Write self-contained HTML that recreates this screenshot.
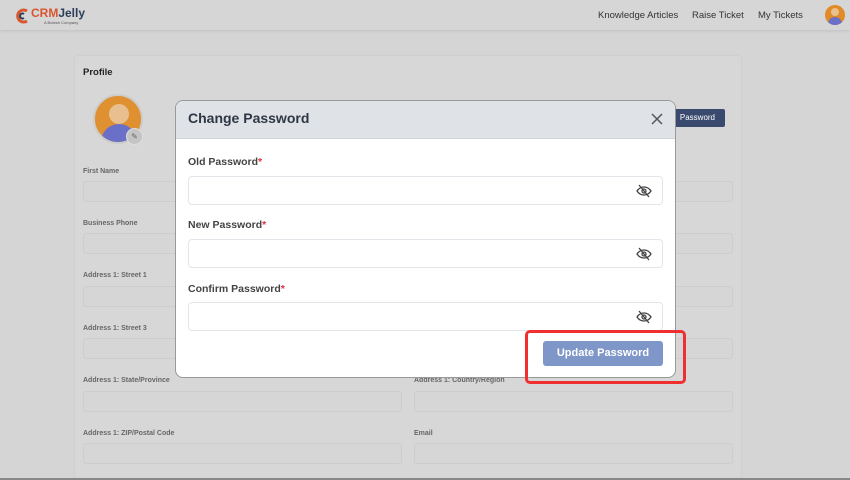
<!DOCTYPE html>
<html style="overflow:hidden;width:850px;height:480px"><head><meta charset="utf-8"><style>
*{box-sizing:border-box;margin:0;padding:0}
body{width:850px;height:480px;overflow:hidden;background:#d5d5d5;font-family:"Liberation Sans",sans-serif;position:relative}
.hdr{position:absolute;left:0;top:0;width:850px;height:30px;background:#d6d6d6;box-shadow:0 1px 3px rgba(0,0,0,.1)}
.nav{position:absolute;top:10px;font-size:9.5px;color:#333}
.card{position:absolute;left:75px;top:56px;width:666px;height:422px;background:#d7d7d7;border-radius:3px;box-shadow:0 0 2px rgba(0,0,0,.08)}
.lbl{position:absolute;font-size:7px;font-weight:bold;color:#666}
.inp{position:absolute;height:21px;border:1px solid #cdcdcd;border-radius:3px;background:#d6d6d6}
.modal{position:absolute;left:175px;top:100px;width:501px;height:278px;background:#fff;border-radius:8px;overflow:hidden;border:1px solid #999}
.mh{height:38px;background:#dfe2e7;border-bottom:1px solid #d0d4da}
.mt{position:absolute;left:12px;top:9px;font-size:14px;font-weight:bold;color:#2f3744}
.ml{position:absolute;left:12px;font-size:10.5px;color:#444;font-weight:bold}
.ml span{color:#e03040}
.mi{position:absolute;left:12px;width:475px;height:29px;border:1px solid #e2e5ea;border-radius:4px}
.eye{position:absolute;right:10px;top:7px}
.btn{position:absolute;left:367px;top:240px;width:120px;height:25px;background:#7f96c8;border-radius:3px;color:#fff;font-size:11px;font-weight:bold;text-align:center;line-height:25px}
.red{position:absolute;left:525px;top:330px;width:161px;height:54px;border:3px solid #f03030;border-radius:5px}
</style></head><body>
<div class="hdr">
 <svg style="position:absolute;left:15px;top:8px" width="16" height="16" viewBox="0 0 16 16"><path d="M12 3A6 6 0 1 0 12 13" fill="none" stroke="#d9572f" stroke-width="3"/><path d="M9 6a2.5 2.5 0 1 0 0 4" fill="none" stroke="#2c3e5a" stroke-width="2"/></svg>
 <div style="position:absolute;left:31px;top:6px;font-size:12px;font-weight:bold;color:#d9572f">CRM<span style="color:#2c3e5a">Jelly</span></div>
 <div style="position:absolute;left:44px;top:20px;font-size:4px;color:#555">A Botesh Company</div>
 <div class="nav" style="left:598px">Knowledge Articles</div>
 <div class="nav" style="left:692px">Raise Ticket</div>
 <div class="nav" style="left:758px">My Tickets</div>
 <div style="position:absolute;left:825px;top:5px;width:20px;height:20px;border-radius:50%;background:#e08a28;overflow:hidden"><div style="position:absolute;left:6px;top:3px;width:8px;height:8px;border-radius:50%;background:#e8c090"></div><div style="position:absolute;left:3px;top:12px;width:14px;height:10px;border-radius:7px 7px 0 0;background:#6a70c8"></div></div>
</div>
<div class="card">
 <div style="position:absolute;left:8px;top:11px;font-size:9.5px;font-weight:bold;color:#222">Profile</div>
 <div style="position:absolute;left:18px;top:38px;width:50px;height:50px;border-radius:50%;background:#df9030;border:2px solid #ccc;overflow:hidden"><div style="position:absolute;left:14px;top:8px;width:20px;height:20px;border-radius:50%;background:#e8c090"></div><div style="position:absolute;left:6px;top:28px;width:36px;height:24px;border-radius:18px 18px 0 0;background:#6a70c8"></div></div>
 <div style="position:absolute;left:51px;top:72px;width:17px;height:17px;border-radius:50%;background:#c4c4c4;border:1px solid #ddd;font-size:8px;color:#666;text-align:center;line-height:15px">✎</div>
 <div style="position:absolute;left:590px;top:53px;width:60px;height:18px;background:#3a4a6e;border-radius:2px;color:#fff;font-size:8px;line-height:18px;text-align:right;padding-right:10px">Password</div>
 <div class="lbl" style="left:8px;top:112px">First Name</div><div class="inp" style="left:8px;top:125px;width:319px"></div><div class="inp" style="left:339px;top:125px;width:319px"></div>
 <div class="lbl" style="left:8px;top:164px">Business Phone</div><div class="inp" style="left:8px;top:177px;width:319px"></div><div class="inp" style="left:339px;top:177px;width:319px"></div>
 <div class="lbl" style="left:8px;top:216px">Address 1: Street 1</div><div class="inp" style="left:8px;top:230px;width:319px"></div><div class="inp" style="left:339px;top:230px;width:319px"></div>
 <div class="lbl" style="left:8px;top:269px">Address 1: Street 3</div><div class="inp" style="left:8px;top:282px;width:319px"></div><div class="inp" style="left:339px;top:282px;width:319px"></div>
 <div class="lbl" style="left:8px;top:321px">Address 1: State/Province</div><div class="inp" style="left:8px;top:335px;width:319px"></div>
 <div class="lbl" style="left:339px;top:321px">Address 1: Country/Region</div><div class="inp" style="left:339px;top:335px;width:319px"></div>
 <div class="lbl" style="left:8px;top:374px">Address 1: ZIP/Postal Code</div><div class="inp" style="left:8px;top:387px;width:319px"></div>
 <div class="lbl" style="left:339px;top:374px">Email</div><div class="inp" style="left:339px;top:387px;width:319px"></div>
</div>
<div style="position:absolute;left:0;top:478px;width:850px;height:2px;background:#888"></div>
<div class="modal">
 <div class="mh"><div class="mt">Change Password</div>
 <svg style="position:absolute;left:474px;top:11px" width="14" height="14" viewBox="0 0 14 14"><path d="M2 2L12 12M12 2L2 12" stroke="#555" stroke-width="1.5"/></svg></div>
 <div class="ml" style="top:55px">Old Password<span>*</span></div>
 <div class="mi" style="top:75px"><svg class="eye" width="16" height="14" viewBox="0 0 16 14"><path d="M1 7C3 4 5 3 8 3s5 1 7 4c-2 3-4 4-7 4S3 10 1 7z" fill="none" stroke="#444" stroke-width="1.3"/><circle cx="8" cy="7" r="2" fill="none" stroke="#444" stroke-width="1.3"/><path d="M3 1L13 13" stroke="#444" stroke-width="1.3"/></svg></div>
 <div class="ml" style="top:118px">New Password<span>*</span></div>
 <div class="mi" style="top:138px"><svg class="eye" width="16" height="14" viewBox="0 0 16 14"><path d="M1 7C3 4 5 3 8 3s5 1 7 4c-2 3-4 4-7 4S3 10 1 7z" fill="none" stroke="#444" stroke-width="1.3"/><circle cx="8" cy="7" r="2" fill="none" stroke="#444" stroke-width="1.3"/><path d="M3 1L13 13" stroke="#444" stroke-width="1.3"/></svg></div>
 <div class="ml" style="top:182px">Confirm Password<span>*</span></div>
 <div class="mi" style="top:201px"><svg class="eye" width="16" height="14" viewBox="0 0 16 14"><path d="M1 7C3 4 5 3 8 3s5 1 7 4c-2 3-4 4-7 4S3 10 1 7z" fill="none" stroke="#444" stroke-width="1.3"/><circle cx="8" cy="7" r="2" fill="none" stroke="#444" stroke-width="1.3"/><path d="M3 1L13 13" stroke="#444" stroke-width="1.3"/></svg></div>
 <div class="btn">Update Password</div>
</div>
<div class="red"></div>
</body></html>
